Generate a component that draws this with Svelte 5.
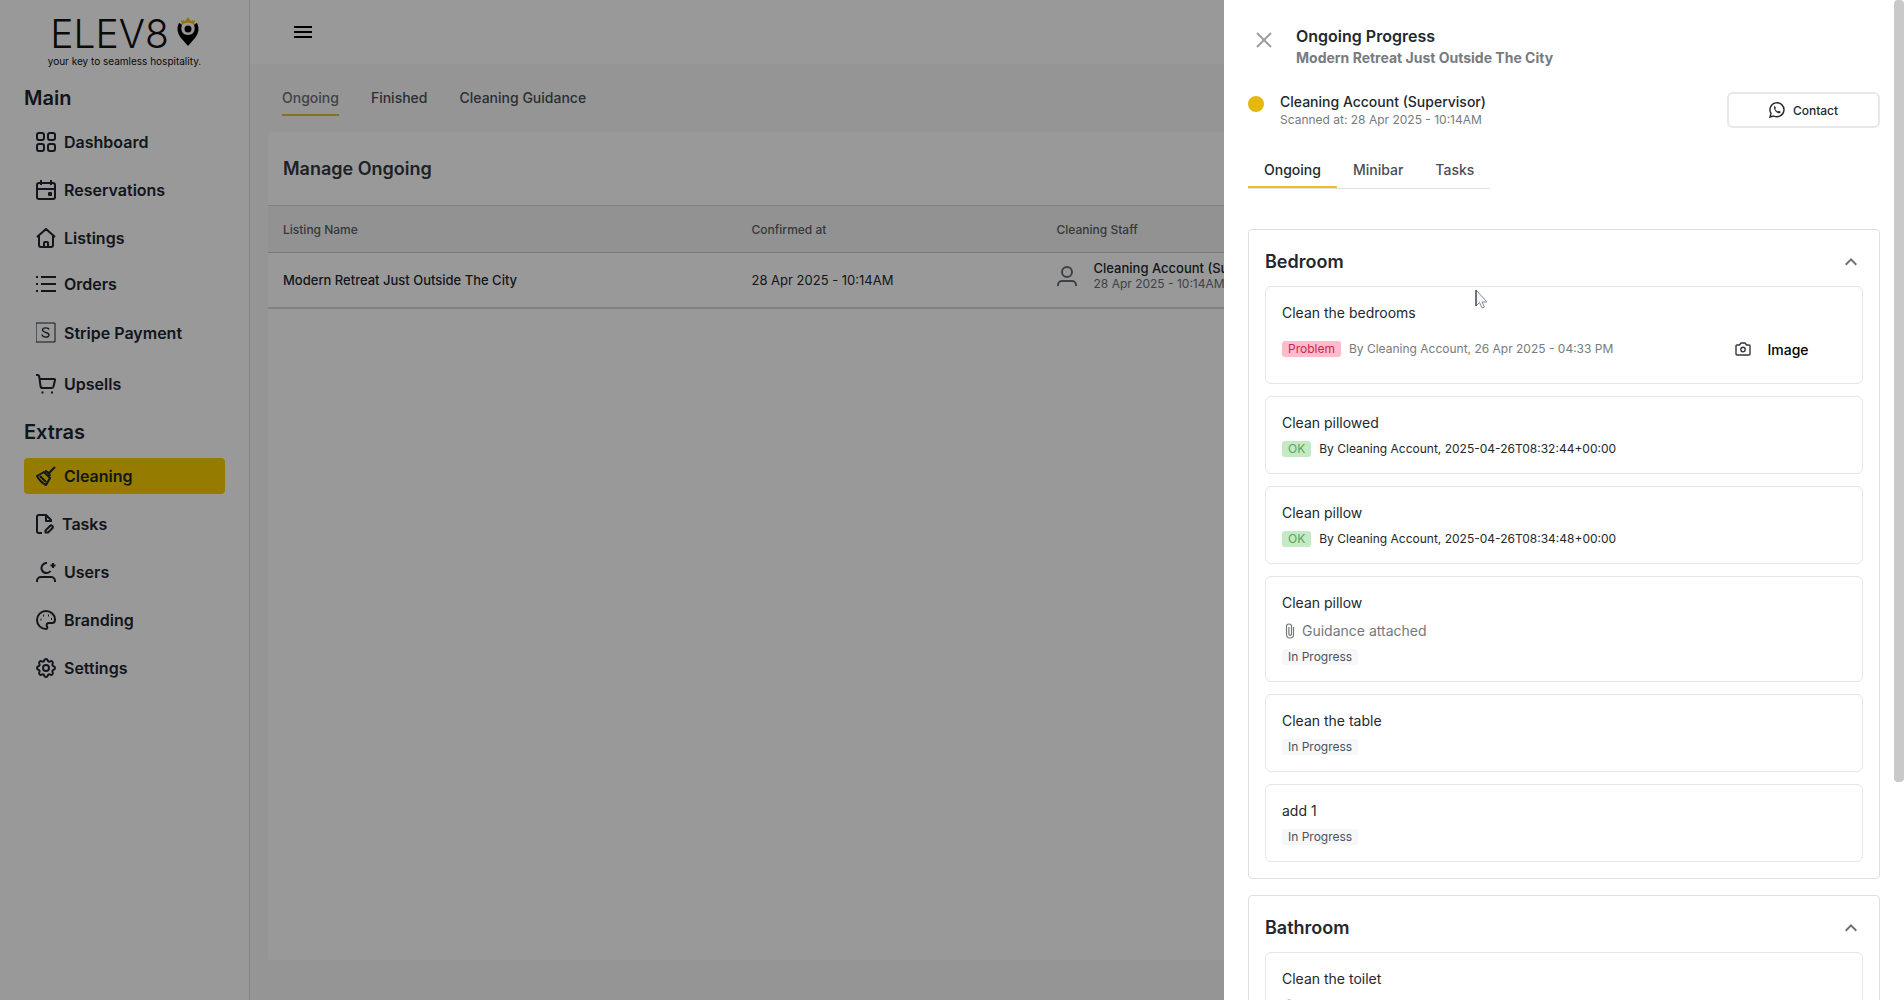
<script>
  // every icon is drawn on a 20x20 grid, height differs for a few of them
  const mainLinks = [
    { name: "Dashboard", width: 20, height: 20, icon: "M3 1h3a2 2 0 0 1 2 2v3a2 2 0 0 1-2 2H3a2 2 0 0 1-2-2V3a2 2 0 0 1 2-2zM14 1h3a2 2 0 0 1 2 2v3a2 2 0 0 1-2 2h-3a2 2 0 0 1-2-2V3a2 2 0 0 1 2-2zM3 12h3a2 2 0 0 1 2 2v3a2 2 0 0 1-2 2H3a2 2 0 0 1-2-2v-3a2 2 0 0 1 2-2zM14 12h3a2 2 0 0 1 2 2v3a2 2 0 0 1-2 2h-3a2 2 0 0 1-2-2v-3a2 2 0 0 1 2-2z" },
    { name: "Reservations", width: 20, height: 20, icon: "M3 3h14a2 2 0 0 1 2 2v12a2 2 0 0 1-2 2H3a2 2 0 0 1-2-2V5a2 2 0 0 1 2-2zM1 9h18M5 0v5M15 0v5M13 13h2v2h-2z" },
    { name: "Listings", width: 20, height: 20, icon: "M1 9l9-8 9 8M3 8v9a2 2 0 0 0 2 2h10a2 2 0 0 0 2-2V8M8 19v-4a1 1 0 0 1 1-1h2a1 1 0 0 1 1 1v4" },
    { name: "Orders", width: 20, height: 16, icon: "M5 1h15M5 8h15M5 15h15M0 1h2M0 8h2M0 15h2" },
    { name: "Stripe Payment", width: 20, height: 26, icon: "" },
    { name: "Upsells", width: 20, height: 20, icon: "M0 1h1.500q1.500 0 1.700 1.500l1.300 9.500q.3 2 2 2h9q1.500 0 2-1.500L19 6q.3-1-1-1H3.500M5.500 18.500h2M15 18.500h2" }
  ];

  const extraLinks = [
    { name: "Cleaning", active: true, width: 20, height: 20, icon: "M19 1l-6 6M9 5c2 0 5 3 5 5M8 6l6 6-4 7c-4-2-7-5-9-9l7-4zM4 10l6 6" },
    { name: "Tasks", width: 18, height: 20, icon: "M6 19H3a2 2 0 0 1-2-2V3a2 2 0 0 1 2-2h7l5 5v2M10 1v6h6M9.500 18.500v-2l4.500-4.500a1.600 1.600 0 0 1 2.300 2.300l-4.300 4.200z" },
    { name: "Users", width: 20, height: 20, icon: "M11 1a5 5 0 1 0 3.500 8M17 1v5M14.500 3.500h5M1 20v-1a4 4 0 0 1 4-4h10a4 4 0 0 1 4 4v1" },
    { name: "Branding", width: 20, height: 20, icon: "M10 1a9 9 0 1 0 0 18c1.500 0 1.500-1.500 1-2.500-1-2 0-3.500 2-3.500h3c2 0 3-1.500 3-3.500C19 5 15 1 10 1zM4.500 9.500h1M7 5.500h1M12 5.500h1M15 9h1" },
    { name: "Settings", width: 20, height: 20, icon: "M8.325 2.317c.426-1.756 2.924-1.756 3.350 0a1.724 1.724 0 0 0 2.573 1.066c1.543-.94 3.310.826 2.370 2.370a1.724 1.724 0 0 0 1.065 2.572c1.756.426 1.756 2.924 0 3.350a1.724 1.724 0 0 0-1.066 2.573c.94 1.543-.826 3.310-2.370 2.370a1.724 1.724 0 0 0-2.572 1.065c-.426 1.756-2.924 1.756-3.350 0a1.724 1.724 0 0 0-2.573-1.066c-1.543.94-3.310-.826-2.370-2.370a1.724 1.724 0 0 0-1.065-2.572c-1.756-.426-1.756-2.924 0-3.350a1.724 1.724 0 0 0 1.066-2.573c-.94-1.543.826-3.310 2.370-2.370 1 .608 2.296.07 2.572-1.065zM10 7a3 3 0 1 0 0 6 3 3 0 0 0 0-6z" }
  ];

  const pageTabs = ["Ongoing", "Finished", "Cleaning Guidance"];
  const drawerTabs = ["Ongoing", "Minibar", "Tasks"];

  const rooms = [
    {
      name: "Bedroom",
      tasks: [
        { title: "Clean the bedrooms", status: "Problem", by: "By Cleaning Account, 26 Apr 2025 - 04:33 PM", image: true },
        { title: "Clean pillowed", status: "OK", by: "By Cleaning Account, 2025-04-26T08:32:44+00:00" },
        { title: "Clean pillow", status: "OK", by: "By Cleaning Account, 2025-04-26T08:34:48+00:00" },
        { title: "Clean pillow", status: "In Progress", guidance: true },
        { title: "Clean the table", status: "In Progress" },
        { title: "add 1", status: "In Progress" }
      ]
    },
    {
      name: "Bathroom",
      tasks: [
        { title: "Clean the toilet", status: "In Progress", guidance: true }
      ]
    }
  ];

  const statusClass = { "Problem": "problem", "OK": "ok", "In Progress": "progress" };

  let pageTab = $state("Ongoing");
  let drawerTab = $state("Ongoing");
  let closed = $state({});
</script>

{#snippet navLinks(links)}
  {#each links as link}
    <a href="#{link.name}" class:active={link.active}>
      <svg width={link.width} height={link.height} viewBox="0 0 {link.width} {link.height}" fill="none" stroke="currentColor" stroke-width="2" stroke-linejoin="round">
        {#if link.icon}
          <path d={link.icon} />
        {:else}
          <rect x="0" y="3" width="19" height="19" stroke-width="1" />
          <path d="M13 9.500C12.500 7.500 6.500 7 6.500 10c0 3 6.500 1.500 6.500 5 0 3-6.500 3-7-.5" stroke-width="1.300" />
        {/if}
      </svg>
      {link.name}
    </a>
  {/each}
{/snippet}

<div class="app">
  <aside>
    <div class="logo">
      <div class="brand">
        <span>ELEV8</span>
        <svg width="22" height="30" viewBox="0 0 22 30">
          <path d="M5 9L4 4l4 1 3-4 3 4 4-1-1 5c-3-3-9-3-12 0z" fill="#f2c51a" />
          <path d="M2 7c-3 6-1 11 2 15l7 8 7-8c3-4 5-9 2-15-1 0-2 1-3 2 2 6-1 10-6 10S3 15 5 9C4 8 3 7 2 7z" fill="#000" />
          <circle cx="11" cy="13" r="3.500" fill="#000" />
        </svg>
      </div>
      <p>your key to seamless hospitality.</p>
    </div>
    <nav>
      <h2>Main</h2>
      {@render navLinks(mainLinks)}
      <h2>Extras</h2>
      {@render navLinks(extraLinks)}
    </nav>
  </aside>

  <div class="page">
    <header>
      <button class="menu" aria-label="Menu">
        <svg width="24" height="24" viewBox="0 0 24 24"><path d="M3 18h18v-2H3v2zm0-5h18v-2H3v2zm0-7v2h18V6H3z" /></svg>
      </button>
    </header>
    <div class="page-tabs">
      {#each pageTabs as tab}
        <button class:active={pageTab === tab} onclick={() => (pageTab = tab)}>{tab}</button>
      {/each}
    </div>
    <main>
      <h1>Manage Ongoing</h1>
      <table>
        <thead>
          <tr>
            <th class="listing">Listing Name</th>
            <th class="confirmed">Confirmed at</th>
            <th>Cleaning Staff</th>
          </tr>
        </thead>
        <tbody>
          <tr>
            <td class="name">Modern Retreat Just Outside The City</td>
            <td>28 Apr 2025 - 10:14AM</td>
            <td>
              <div class="staff">
                <svg width="20" height="20" viewBox="0 0 20 20" fill="none" stroke="currentColor" stroke-width="2">
                  <circle cx="10" cy="6" r="5" />
                  <path d="M1 20v-1a4 4 0 0 1 4-4h10a4 4 0 0 1 4 4v1" />
                </svg>
                <div>
                  <strong>Cleaning Account (Supervisor)</strong>
                  <small>28 Apr 2025 - 10:14AM</small>
                </div>
              </div>
            </td>
          </tr>
        </tbody>
      </table>
    </main>
  </div>
</div>

<div class="backdrop"></div>

<div class="drawer" role="dialog" aria-label="Ongoing Progress">
  <div class="scroll">
    <div class="drawer-head">
      <button class="close" aria-label="Close">
        <svg width="16" height="16" viewBox="0 0 16 16" fill="none" stroke="currentColor" stroke-width="2"><path d="M1 1l14 14M15 1L1 15" /></svg>
      </button>
      <div>
        <h2>Ongoing Progress</h2>
        <p>Modern Retreat Just Outside The City</p>
      </div>
    </div>

    <div class="person">
      <span class="dot"></span>
      <div>
        <strong>Cleaning Account (Supervisor)</strong>
        <small>Scanned at: 28 Apr 2025 - 10:14AM</small>
      </div>
      <button class="contact">
        <svg width="16" height="16" viewBox="0 0 16 16" fill="none" stroke="currentColor">
          <path d="M1 15l1-3.600A7 7 0 1 1 4.800 14z" stroke-width="1.400" />
          <path d="M5 4.500l1-.4.9 1.900-.7 1c.6 1.200 1.500 2 2.700 2.600l1-.8 1.800 1-.5 1.300C8.500 12 4.500 8.500 5 4.500z" fill="currentColor" stroke="none" />
        </svg>
        Contact
      </button>
    </div>

    <div class="drawer-tabs">
      {#each drawerTabs as tab}
        <button class:active={drawerTab === tab} onclick={() => (drawerTab = tab)}>{tab}</button>
      {/each}
    </div>

    <div class="rooms">
      {#each rooms as room}
        <section>
          <div class="room-head">
            <h3>{room.name}</h3>
            <button aria-label="Toggle {room.name}" onclick={() => (closed[room.name] = !closed[room.name])}>
              <svg width="24" height="24" viewBox="0 0 24 24"><path d="M12 8l-6 6 1.410 1.410L12 10.830l4.590 4.580L18 14z" fill="currentColor" /></svg>
            </button>
          </div>
          {#if !closed[room.name]}
            <div class="tasks">
              {#each room.tasks as task}
                <article>
                  <h4>{task.title}</h4>
                  {#if task.guidance}
                    <div class="guidance">
                      <svg width="16" height="16" viewBox="0 0 16 16" fill="none" stroke="currentColor" stroke-width="1.200"><path d="M11.500 4v7.500a3.500 3.500 0 0 1-7 0V3.500a2.500 2.500 0 0 1 5 0v7.500a1.300 1.300 0 0 1-2.600 0V4" /></svg>
                      Guidance attached
                    </div>
                  {/if}
                  <div class="status">
                    <span class="badge {statusClass[task.status]}">{task.status}</span>
                    {#if task.by}
                      <span class="by" class:muted={task.image}>{task.by}</span>
                    {/if}
                    {#if task.image}
                      <button class="image">
                        <svg width="16" height="14" viewBox="0 0 16 14" fill="none" stroke="currentColor" stroke-width="1.400" stroke-linejoin="round">
                          <path d="M2 3h2.500L6 1h4l1.500 2H14a1 1 0 0 1 1 1v8a1 1 0 0 1-1 1H2a1 1 0 0 1-1-1V4a1 1 0 0 1 1-1z" />
                          <circle cx="8" cy="7.500" r="2.200" />
                        </svg>
                        Image
                      </button>
                    {/if}
                  </div>
                </article>
              {/each}
            </div>
          {/if}
        </section>
      {/each}
    </div>
  </div>
  <div class="thumb"></div>
</div>

<svg class="cursor" width="13" height="20" viewBox="0 0 13 20">
  <path d="M1 1v16l3.500-3.500L7 19l2.500-1-2.300-5H12z" fill="#f4f7fb" stroke="#888c92" />
  <path d="M1 1v16" stroke="#222" />
</svg>

<style>
  :global(body) {
    font-family: Inter, "Liberation Sans", sans-serif;
    color: #23282e;
    overflow: hidden;
  }

  h1, h2, h3, h4, p {
    margin: 0;
  }

  button {
    font-family: inherit;
    color: inherit;
    background: none;
    border: none;
    padding: 0;
    cursor: pointer;
  }

  svg {
    display: block;
    flex: none;
  }

  strong,
  small {
    display: block;
    font-weight: 500;
    white-space: nowrap;
  }

  .app {
    display: flex;
    height: 100vh;
  }

  aside {
    width: 250px;
    box-sizing: border-box;
    flex: none;
    padding: 16px 24px 0;
    background: #fff;
    border-right: 1px solid #dcdcdc;
    color: #1d2630;
  }

  .logo {
    height: 67px;
    text-align: center;
    color: #111;
  }

  .brand {
    display: flex;
    justify-content: center;
    gap: 8px;
    height: 37px;
  }

  .brand span {
    font-size: 39px;
    line-height: 36px;
    font-weight: 300;
  }

  .logo p {
    font-size: 10px;
    line-height: 16px;
  }

  nav h2 {
    font-size: 20px;
    line-height: 30px;
    font-weight: 600;
    margin-bottom: 11px;
  }

  nav a + h2 {
    margin-top: 15px;
  }

  nav a {
    display: flex;
    align-items: center;
    gap: 8px;
    padding: 8px 12px;
    border-radius: 4px;
    font-size: 16px;
    line-height: 16px;
    font-weight: 600;
    color: inherit;
    text-decoration: none;
  }

  nav a + a {
    margin-top: 12px;
  }

  nav a.active {
    background: #f8ce00;
  }

  .page {
    flex: 1;
    display: flex;
    flex-direction: column;
    background: #f8f8fa;
  }

  header {
    display: flex;
    align-items: center;
    height: 64px;
    padding: 0 41px;
    background: #fff;
  }

  .menu {
    color: #000;
  }

  .page-tabs {
    display: flex;
    gap: 32px;
    padding: 20px 32px 16px;
  }

  .page-tabs button {
    padding: 4px 0 6px;
    border-bottom: 2px solid transparent;
    font-size: 14px;
    line-height: 20px;
    font-weight: 500;
    color: #494e55;
  }

  .page-tabs button.active {
    border-color: #e5b93c;
    color: #6c7075;
  }

  main {
    flex: 1;
    margin: 0 18px 40px;
    background: #fff;
    border-radius: 4px;
  }

  h1 {
    padding: 22px 15px;
    font-size: 18px;
    line-height: 29px;
    font-weight: 600;
    color: #33383e;
  }

  table {
    width: 100%;
    border-collapse: collapse;
    table-layout: fixed;
    text-align: left;
  }

  th {
    height: 46px;
    padding: 0 15px;
    background: #f4f4f4;
    border-top: 1px solid #d8d8d8;
    border-bottom: 1px solid #c8c8c8;
    font-size: 12px;
    font-weight: 500;
    color: #5a5f66;
  }

  td {
    height: 54px;
    padding: 0 15px;
    border-bottom: 2px solid #dadada;
    font-size: 13px;
  }

  td.name {
    font-weight: 500;
  }

  .listing {
    width: 27.100%;
  }

  .confirmed {
    width: 17%;
  }

  .staff {
    display: flex;
    gap: 17px;
    padding-bottom: 8px;
  }

  .staff svg {
    margin-top: 6px;
    color: #6a6e73;
  }

  .staff strong {
    font-size: 13px;
    line-height: 16px;
  }

  .staff small {
    font-size: 12px;
    line-height: 16px;
    font-weight: 400;
    color: #6a6e73;
  }

  .backdrop {
    position: fixed;
    inset: 0;
    background: rgba(0, 0, 0, .4);
  }

  .drawer {
    position: fixed;
    top: 0;
    right: 0;
    bottom: 0;
    width: 680px;
    background: #fff;
  }

  .scroll {
    height: 100%;
    box-sizing: border-box;
    overflow-y: auto;
    scrollbar-width: none;
    padding: 24px;
  }

  .thumb {
    position: absolute;
    top: 0;
    right: 0;
    width: 10px;
    height: 78.200%;
    border-radius: 4px;
    background: #c9c9c9;
  }

  .drawer-head {
    display: flex;
    gap: 24px;
    padding-left: 8px;
  }

  .close {
    align-self: flex-start;
    margin-top: 8px;
    color: #9b9fa3;
  }

  .drawer-head h2 {
    font-size: 16px;
    line-height: 24px;
    font-weight: 600;
  }

  .drawer-head p {
    font-size: 14px;
    line-height: 20px;
    font-weight: 700;
    color: #777b80;
  }

  .person {
    display: flex;
    align-items: flex-start;
    gap: 16px;
    margin-top: 24px;
  }

  .dot {
    width: 16px;
    height: 16px;
    margin-top: 4px;
    border-radius: 50%;
    background: #e5b80b;
  }

  .person strong {
    font-size: 14px;
    line-height: 20px;
  }

  .person small {
    font-size: 12px;
    line-height: 16px;
    font-weight: 400;
    color: #777b80;
  }

  .contact {
    display: flex;
    align-items: center;
    justify-content: center;
    gap: 8px;
    width: 153px;
    height: 36px;
    margin-left: auto;
    border: 2px solid #e8e8e8;
    border-radius: 6px;
    font-size: 12px;
    font-weight: 500;
  }

  .drawer-tabs {
    display: flex;
    width: fit-content;
    margin-top: 24px;
    border-bottom: 1px solid #e2e2e2;
  }

  .drawer-tabs button {
    padding: 8px 16px 6px;
    border-bottom: 2px solid transparent;
    font-size: 14px;
    line-height: 20px;
    font-weight: 500;
    color: #494e55;
  }

  .drawer-tabs button.active {
    border-color: #edbd2f;
    color: #23282e;
  }

  .rooms {
    display: flex;
    flex-direction: column;
    gap: 16px;
    margin-top: 40px;
  }

  section {
    padding: 16px;
    border: 1px solid #dfdfdf;
    border-radius: 4px;
  }

  .room-head {
    display: flex;
    justify-content: space-between;
    align-items: center;
    height: 32px;
    margin-bottom: 8px;
    color: #6b6f74;
  }

  h3 {
    font-size: 18px;
    line-height: 24px;
    font-weight: 600;
    color: #23282e;
  }

  .tasks {
    display: flex;
    flex-direction: column;
    gap: 12px;
  }

  article {
    display: flex;
    flex-direction: column;
    gap: 8px;
    padding: 16px;
    border: 1px solid #e6e6e6;
    border-radius: 6px;
  }

  h4 {
    font-size: 14px;
    line-height: 20px;
    font-weight: 400;
  }

  .guidance {
    display: flex;
    align-items: center;
    gap: 4px;
    font-size: 14px;
    line-height: 20px;
    color: #74787c;
  }

  .status {
    display: flex;
    align-items: center;
    gap: 8px;
    font-size: 12px;
    line-height: 16px;
  }

  .badge {
    padding: 0 6px;
    border-radius: 3px;
  }

  .problem {
    background: #fcbccb;
    color: #cf2450;
  }

  .ok {
    background: #c3eac4;
    color: #55a55c;
  }

  .progress {
    background: #f6f7f8;
    color: #4d5358;
  }

  .muted {
    color: #777b80;
  }

  .image {
    display: flex;
    align-items: center;
    justify-content: center;
    gap: 16px;
    width: 148px;
    height: 36px;
    margin-left: auto;
    font-size: 14px;
    font-weight: 500;
    color: #000;
  }

  .image svg {
    color: #33383e;
  }

  .cursor {
    position: fixed;
    left: 1475px;
    top: 289px;
  }
</style>
